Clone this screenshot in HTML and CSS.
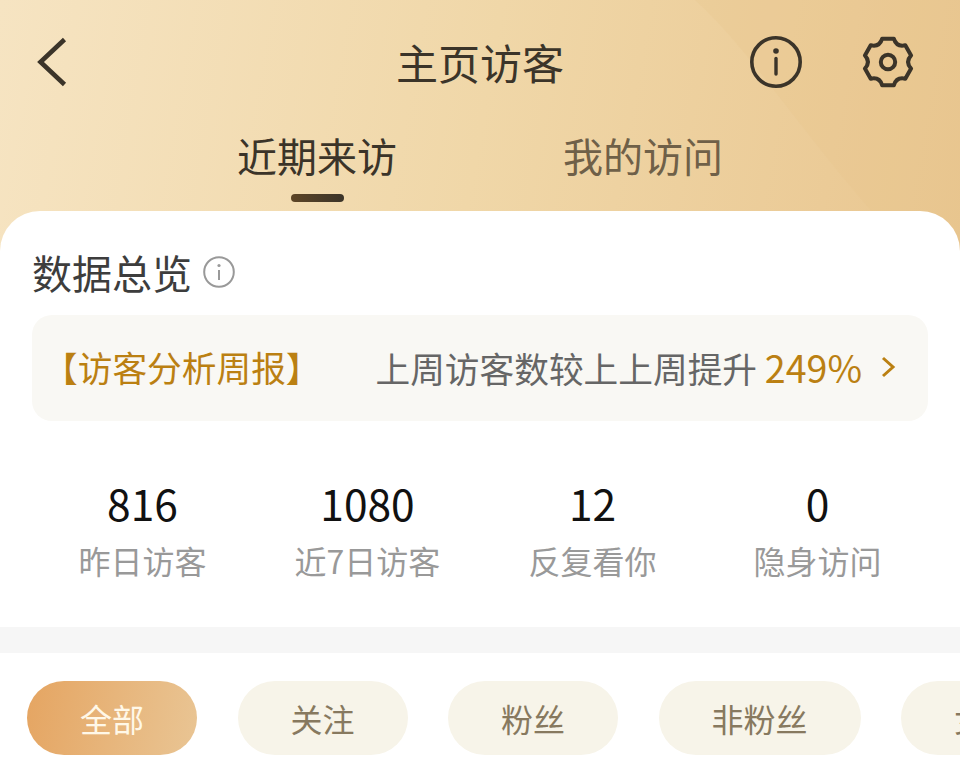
FILE: index.html
```html
<!DOCTYPE html>
<html lang="zh-CN">
  <head>
    <meta charset="UTF-8" />
    <meta name="viewport" content="width=device-width, initial-scale=1.0" />
    <title>主页访客</title>
    <link rel="stylesheet" href="styles.css">
  </head>
  <body>
    <div class="page">
      <header class="hero">
        <svg class="hero-curve" width="960" height="260" viewBox="0 0 960 260">
          <path d="M695 0C750 50 800 130 875 215L960 260V0Z" fill="#e7c48a" opacity="0.26" />
        </svg>
        <div class="topbar">
          <svg class="back" width="40" height="60" viewBox="0 0 40 60">
            <path d="M32.5 8.5L8.5 31L32.5 53.5" fill="none" stroke="#3b3429" stroke-width="4.6" />
          </svg>
          <h1 class="title">主页访客</h1>
          <div class="actions">
            <svg width="52" height="52" viewBox="0 0 52 52">
              <circle cx="26" cy="26" r="24.2" fill="none" stroke="#3b3429" stroke-width="3.6" />
              <circle cx="26" cy="15" r="2.8" fill="#3b3429" />
              <path d="M26 22.5V38" stroke="#3b3429" stroke-width="3.4" stroke-linecap="round" />
            </svg>
            <svg width="52" height="52" viewBox="0 0 52 52">
              <path d="M20.2 2.7H31.8Q34.5 11.3 43.3 9.3L49.1 19.4Q43 26 49.1 32.6L43.3 42.7Q34.5 40.7 31.8 49.3H20.2Q17.5 40.7 8.7 42.7L2.9 32.6Q9 26 2.9 19.4L8.7 9.3Q17.5 11.3 20.2 2.7Z" fill="none" stroke="#3b3429" stroke-width="4" stroke-linejoin="round" />
              <circle cx="26" cy="26" r="7.2" fill="none" stroke="#3b3429" stroke-width="4" />
            </svg>
          </div>
        </div>
        <nav class="tabs">
          <a class="tab tab-active">近期来访</a>
          <a class="tab">我的访问</a>
        </nav>
      </header>

      <main class="card">
        <section class="overview">
          <h2 class="overview-title">
            数据总览
            <svg width="32" height="32" viewBox="0 0 32 32">
              <circle cx="16" cy="16" r="14.8" fill="none" stroke="#999" stroke-width="2" />
              <circle cx="16" cy="9.5" r="1.6" fill="#999" />
              <path d="M16 14V24" stroke="#999" stroke-width="2" />
            </svg>
          </h2>
          <div class="report">
            <span class="report-tag">【访客分析周报】</span>
            <span class="report-text">上周访客数较上上周提升 <em>249%</em></span>
            <svg width="16" height="24" viewBox="0 0 16 24">
              <path d="M3 3L13 12L3 21" fill="none" stroke="#bb8012" stroke-width="3" />
            </svg>
          </div>
          <div class="stats">
            <div class="stat"><b>816</b><span>昨日访客</span></div>
            <div class="stat"><b>1080</b><span>近7日访客</span></div>
            <div class="stat"><b>12</b><span>反复看你</span></div>
            <div class="stat"><b>0</b><span>隐身访问</span></div>
          </div>
        </section>
        <div class="divider"></div>
        <div class="filters">
          <a class="pill pill-active">全部</a>
          <a class="pill">关注</a>
          <a class="pill">粉丝</a>
          <a class="pill">非粉丝</a>
          <a class="pill">女粉丝</a>
        </div>
      </main>
    </div>
  </body>
</html>
```
FILE: styles.css
```css
* {
  box-sizing: border-box;
}

body {
  margin: 0;
  font-family: "Noto Sans CJK SC", "Noto Sans", sans-serif;
  background: #fff;
}

.page {
  width: 960px;
  height: 766px;
  overflow: hidden;
}

.hero {
  position: relative;
  height: 260px;
  padding-top: 31px;
  background: linear-gradient(100deg, #f6e4c2 0%, #f0d7a8 50%, #e9c690 100%);
}

.hero-curve {
  position: absolute;
  top: 0;
  left: 0;
}

.topbar {
  position: relative;
  display: grid;
  grid-template-columns: 1fr auto 1fr;
  align-items: center;
  height: 60px;
  padding: 0 46px;
}

.back {
  margin-left: -14px;
}

.title {
  margin: 2px 0 0;
  font-size: 42px;
  font-weight: 400;
  line-height: 58px;
  color: #3b3429;
}

.actions {
  display: flex;
  justify-content: flex-end;
  gap: 60px;
  margin-top: 2px;
}

.tabs {
  position: relative;
  display: flex;
  justify-content: center;
  gap: 166px;
  margin-top: 34px;
}

.tab {
  position: relative;
  font-size: 40px;
  line-height: 60px;
  color: #6f6048;
}

.tab-active {
  color: #3b3429;
}

.tab-active::after {
  content: "";
  position: absolute;
  left: 54px;
  bottom: -17px;
  width: 53px;
  height: 8px;
  border-radius: 4px;
  background: linear-gradient(90deg, #5d4526, #3b3429);
}

.card {
  position: relative;
  margin-top: -49px;
  background: #fff;
  border-radius: 40px 40px 0 0;
}

.overview {
  padding: 33px 32px 0;
}

.overview-title {
  display: flex;
  align-items: center;
  gap: 11px;
  margin: 0;
  font-size: 40px;
  font-weight: 400;
  line-height: 56px;
  color: #3d3d3d;
}

.report {
  display: flex;
  align-items: center;
  height: 106px;
  margin-top: 15px;
  padding: 0 32px 3px 11px;
  border-radius: 20px;
  background: #f9f8f4;
  font-size: 34.7px;
}

.report-tag {
  color: #bb8012;
}

.report-text {
  margin-left: auto;
  margin-right: 18px;
  color: #666;
}

.report-text em {
  font-style: normal;
  font-size: 37.6px;
  color: #bb8012;
}

.stats {
  display: grid;
  grid-template-columns: repeat(4, 225px);
  justify-content: center;
  margin-top: 54px;
}

.stat {
  display: flex;
  flex-direction: column;
  align-items: center;
}

.stat b {
  font-size: 42.5px;
  font-weight: 400;
  line-height: 56px;
  color: #111;
}

.stat span {
  font-size: 32px;
  line-height: 58px;
  color: #999;
}

.divider {
  height: 26px;
  margin-top: 38px;
  background: #f6f6f6;
}

.filters {
  display: flex;
  gap: 40.5px;
  margin-top: 28px;
  padding-left: 27px;
}

.pill {
  flex: none;
  height: 74px;
  padding: 0 53px;
  border-radius: 37px;
  background: #f7f4e9;
  font-size: 32px;
  line-height: 74px;
  color: #87795f;
}

.pill-active {
  background: linear-gradient(100deg, #e5a562, #e9c594);
  color: #fff8e8;
}
```
